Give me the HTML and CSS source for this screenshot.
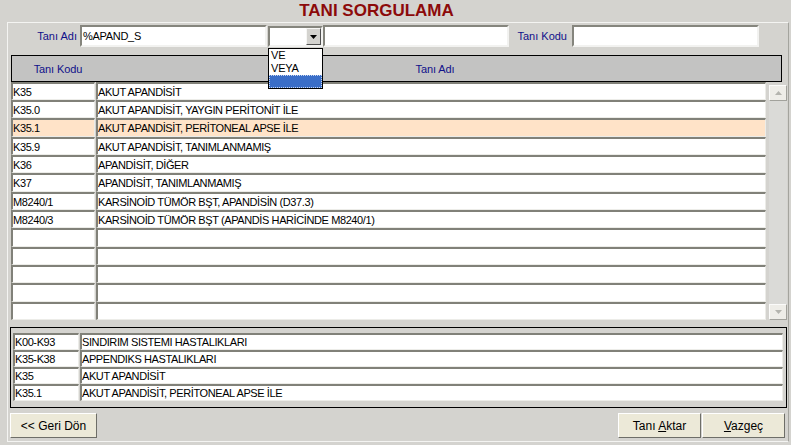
FILE: index.html
```html
<!DOCTYPE html>
<html lang="tr">
<head>
<meta charset="utf-8">
<title>Tanı Sorgulama</title>
<link rel="stylesheet" href="styles.css">
</head>
<body>
<div class="title">TANI SORGULAMA</div>
<div class="panel">
  <div class="filter">
    <label class="lbl lbl-ad">Tanı Adı</label>
    <div class="field f-ad">%APAND_S</div>
    <div class="combo">
      <span class="combo-btn"><svg width="7" height="4" viewBox="0 0 7 4"><polygon points="0,0 7,0 3.5,4" fill="#000"/></svg></span>
      <ul class="combo-list">
        <li>VE</li>
        <li>VEYA</li>
        <li class="sel"></li>
      </ul>
    </div>
    <div class="field f-mid"></div>
    <label class="lbl lbl-kod">Tanı Kodu</label>
    <div class="field f-kod"></div>
  </div>

  <div class="grid">
    <div class="grid-head">
      <div class="h-kod">Tanı Kodu</div>
      <div class="h-ad">Tanı Adı</div>
    </div>
    <div class="grid-body">
      <div class="rows">
        <div class="row"><div class="cell c-kod">K35</div><div class="cell c-ad">AKUT APANDİSİT</div></div>
        <div class="row"><div class="cell c-kod">K35.0</div><div class="cell c-ad">AKUT APANDİSİT, YAYGIN PERİTONİT İLE</div></div>
        <div class="row hl"><div class="cell c-kod">K35.1</div><div class="cell c-ad">AKUT APANDİSİT, PERİTONEAL APSE İLE</div></div>
        <div class="row"><div class="cell c-kod">K35.9</div><div class="cell c-ad">AKUT APANDİSİT, TANIMLANMAMIŞ</div></div>
        <div class="row"><div class="cell c-kod">K36</div><div class="cell c-ad">APANDİSİT, DİĞER</div></div>
        <div class="row"><div class="cell c-kod">K37</div><div class="cell c-ad">APANDİSİT, TANIMLANMAMIŞ</div></div>
        <div class="row"><div class="cell c-kod">M8240/1</div><div class="cell c-ad">KARSİNOİD TÜMÖR BŞT, APANDİSİN (D37.3)</div></div>
        <div class="row"><div class="cell c-kod">M8240/3</div><div class="cell c-ad">KARSİNOİD TÜMÖR BŞT (APANDİS HARİCİNDE M8240/1)</div></div>
        <div class="row"><div class="cell c-kod"></div><div class="cell c-ad"></div></div>
        <div class="row"><div class="cell c-kod"></div><div class="cell c-ad"></div></div>
        <div class="row"><div class="cell c-kod"></div><div class="cell c-ad"></div></div>
        <div class="row"><div class="cell c-kod"></div><div class="cell c-ad"></div></div>
        <div class="row"><div class="cell c-kod"></div><div class="cell c-ad"></div></div>
      </div>
      <div class="vscroll">
        <div class="sb-btn"><svg width="7" height="4" viewBox="0 0 7 4"><polygon points="0,4 7,4 3.5,0" fill="#b4b4ae"/></svg></div>
        <div class="sb-btn"><svg width="7" height="4" viewBox="0 0 7 4"><polygon points="0,0 7,0 3.5,4" fill="#b4b4ae"/></svg></div>
      </div>
    </div>
  </div>

  <div class="tree">
    <div class="trow"><div class="cell t-kod">K00-K93</div><div class="cell t-ad">SINDIRIM SISTEMI HASTALIKLARI</div></div>
    <div class="trow"><div class="cell t-kod">K35-K38</div><div class="cell t-ad">APPENDIKS HASTALIKLARI</div></div>
    <div class="trow"><div class="cell t-kod">K35</div><div class="cell t-ad">AKUT APANDİSİT</div></div>
    <div class="trow"><div class="cell t-kod">K35.1</div><div class="cell t-ad">AKUT APANDİSİT, PERİTONEAL APSE İLE</div></div>
  </div>

  <div class="actions">
    <button class="btn btn-back">&lt;&lt; Geri Dön</button>
    <button class="btn btn-aktar">Tanı <u>A</u>ktar</button>
    <button class="btn btn-vazgec"><u>V</u>azgeç</button>
  </div>
</div>
</body>
</html>
```
FILE: styles.css
```css
* { box-sizing: border-box; }
html, body { margin: 0; padding: 0; }
body {
  width: 791px;
  height: 445px;
  overflow: hidden;
  background: #d4d3cf;
  font-family: "Liberation Sans", Arial, sans-serif;
  font-size: 11px;
  color: #000;
}
.title {
  height: 22px;
  line-height: 22px;
  text-align: center;
  padding-right: 38px;
  font-size: 17px;
  font-weight: bold;
  color: #8c0a0a;
}
.panel {
  margin-left: 7px;
  width: 782px;
  height: 420px;
  border-top: 1px solid #f4f4f2;
  border-left: 1px solid #f4f4f2;
  border-bottom: 1px solid #f4f4f2;
  border-right: 1px solid #a4a49e;
}

/* filter bar */
.filter {
  display: flex;
  align-items: flex-start;
  height: 27px;
  padding-top: 2px;
}
.lbl {
  height: 22px;
  line-height: 22px;
  color: #10108a;
  text-align: right;
  white-space: nowrap;
}
.lbl-ad { width: 72px; padding-right: 3px; }
.lbl-kod { width: 63px; padding-right: 5px; }
.field {
  height: 22px;
  background: #fff;
  border: 2px solid;
  border-color: #85857d #f2f2f0 #f2f2f0 #85857d;
  line-height: 18px;
  padding-left: 1px;
  letter-spacing: -0.3px;
  white-space: nowrap;
}
.f-ad { width: 187px; }
.f-mid { width: 186px; }
.f-kod { width: 187px; }
.combo {
  position: relative;
  width: 55px;
  height: 21px;
  margin: 1px 0 0 1px;
  background: #fff;
  border: 2px solid;
  border-color: #85857d #f2f2f0 #f2f2f0 #85857d;
  display: flex;
  justify-content: flex-end;
}
.combo-btn {
  width: 15px;
  height: 17px;
  background: #d4d3cf;
  border: 1px solid;
  border-color: #f6f6f4 #505050 #505050 #f6f6f4;
  display: flex;
  align-items: center;
  justify-content: center;
}
.combo-list {
  position: absolute;
  left: -2px;
  top: 20px;
  width: 55px;
  margin: 0;
  padding: 0;
  list-style: none;
  background: #fff;
  border: 1px solid #000;
  z-index: 5;
}
.combo-list li {
  height: 13px;
  line-height: 13px;
  padding-left: 2px;
  letter-spacing: -0.2px;
}
.combo-list li.sel {
  background: #3a6ec8;
  border: 1px dotted #c9d7f0;
}

/* grid */
.grid {
  margin: 5px 0 0 3px;
}
.grid-head {
  width: 771px;
  height: 27px;
  border: 1px solid #000;
  background: #c3c3c2;
  display: flex;
  align-items: center;
  color: #10108a;
  letter-spacing: -0.1px;
}
.h-kod { width: 84px; padding-left: 8px; text-align: center; }
.h-ad { width: 670px; padding-left: 8px; text-align: center; }
.grid-body { display: flex; }
.rows { width: 755px; }
.row { display: flex; gap: 1px; height: 18px; }
.row:nth-child(3n) { height: 19px; }
.cell {
  height: 100%;
  background: #fff;
  border-top: 2px solid #818179;
  border-left: 2px solid #818179;
  border-right: 1px solid #ecece8;
  border-bottom: 1px solid #ecece8;
  display: flex;
  align-items: center;
  white-space: nowrap;
  overflow: hidden;
  letter-spacing: -0.4px;
}
.c-kod { width: 84px; }
.c-ad { width: 670px; }
.row.hl .cell { background: #ffe3c8; }

.vscroll {
  width: 18px;
  height: 235px;
  margin: 3px 0 0 3px;
  background: #dadad7;
  display: flex;
  flex-direction: column;
  justify-content: space-between;
}
.sb-btn {
  height: 16px;
  background: #eeede8;
  border: 1px solid;
  border-color: #fbfbfa #a2a29c #a2a29c #fbfbfa;
  display: flex;
  align-items: center;
  justify-content: center;
}

/* bottom hierarchy panel */
.tree {
  margin: 7px 0 0 2px;
  width: 777px;
  height: 81px;
  border: 1px solid #000;
  padding: 5px 3px 0 2px;
}
.trow { display: flex; gap: 1px; height: 17px; }
.t-kod { width: 66px; }
.t-ad { width: 703px; }

/* buttons */
.actions {
  display: flex;
  margin-top: 5px;
  padding: 0 3px 0 2px;
}
.btn {
  height: 25px;
  margin: 0;
  padding: 0;
  background: #ece9d8;
  border: 1px solid;
  border-color: #ffffff #6e6e68 #6e6e68 #ffffff;
  font-family: "Liberation Sans", Arial, sans-serif;
  font-size: 12px;
  color: #000;
}
.btn-back { width: 87px; }
.btn-aktar { width: 83px; margin-left: auto; }
.btn-vazgec { width: 83px; margin-left: 1px; }
```
